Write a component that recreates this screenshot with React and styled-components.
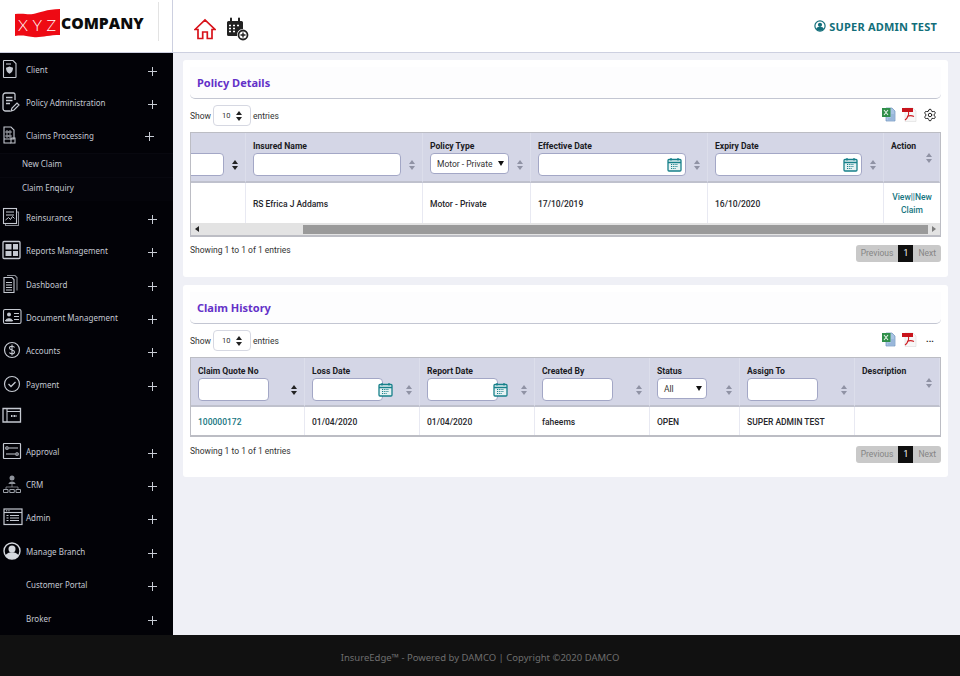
import React from 'react';
import styled, { createGlobalStyle } from 'styled-components';
import { Settings } from 'lucide-react';

const GlobalStyle = createGlobalStyle`
  html, body {
    margin: 0;
    padding: 0;
    height: 100%;
    overflow: hidden;
    background: #eff0f6;
    font-family: "Roboto", "Liberation Sans", sans-serif;
  }
  * { box-sizing: border-box; }
`;

const Page = styled.div`
  display: grid;
  grid-template-rows: 53px 582px 41px;
  grid-template-columns: 960px;
  height: 676px;
  width: 960px;
`;

const Header = styled.header`
  display: flex;
  align-items: stretch;
  background: #fff;
  border-bottom: 1px solid #cdd0e0;
`;

const LogoArea = styled.div`
  width: 173px;
  flex: none;
  display: flex;
  align-items: flex-start;
  padding: 9px 0 0 15px;
  border-right: 1px solid #cdd0e0;
`;

const CompanyName = styled.span`
  font-family: "Open Sans", "Noto Sans", sans-serif;
  font-weight: 800;
  font-size: 15.7px;
  line-height: 28px;
  color: #0c0c0c;
  margin-left: 1px;
`;

const LogoRule = styled.div`
  width: 1px;
  height: 39px;
  background: #e3e3e3;
  margin: -7px 0 0 14px;
`;

const HeaderIcons = styled.div`
  display: flex;
  align-items: center;
  gap: 10px;
  padding: 6px 0 0 21px;
  flex: 1;
`;

const UserName = styled.div`
  display: flex;
  align-items: center;
  gap: 3px;
  padding-right: 23px;
  color: #126e7a;
  font-family: "Noto Sans", sans-serif;
  font-weight: 700;
  font-size: 11px;
  letter-spacing: 0.2px;
`;

const Middle = styled.div`
  display: flex;
  min-height: 0;
  min-width: 0;
`;

const Sidebar = styled.nav`
  width: 173px;
  flex: none;
  background: #020207;
  font-family: "Noto Sans", sans-serif;
`;

const NavRow = styled.div`
  display: grid;
  grid-template-columns: 26px 1fr 9px;
  align-items: center;
  height: 33.4px;
  padding-right: ${(p) => (p.$open ? '19px' : '16px')};
  color: #c3c8d2;
  font-size: 8px;
  svg.plus { margin-top: ${(p) => (p.$open ? '0' : '3px')}; }
`;

const NavLabel = styled.span`
  padding-bottom: 1px;
`;

const NavIcon = styled.span`
  display: flex;
  padding: 0 0 ${(p) => (p.$raised ? '6px' : '2px')} 2px;
`;

const SubRow = styled.div`
  height: 24px;
  display: flex;
  align-items: center;
  padding: 0 0 4px 22px;
  color: #c3c8d2;
  font-size: 8px;
  background: #04040a;
  border-top: 1px solid #08080f;
`;

const Content = styled.main`
  flex: 1;
  min-width: 0;
  padding: 7px 12px 0 10px;
  display: flex;
  flex-direction: column;
  gap: 8px;
`;

const Card = styled.section`
  background: #fff;
  height: ${(p) => p.$height}px;
  padding: 7px;
  border-radius: 3px;
`;

const TitleBar = styled.div`
  height: 32px;
  background: #fdfdfe;
  border-bottom: 1px solid #c3c6d2;
  border-radius: 0 0 5px 5px;
  padding-left: 7px;
  display: flex;
  align-items: center;
`;

const Title = styled.h2`
  margin: 0;
  font-family: "Noto Sans", sans-serif;
  font-size: 11px;
  font-weight: 700;
  color: #6431c8;
`;

const Toolbar = styled.div`
  display: flex;
  align-items: center;
  justify-content: space-between;
  height: 21px;
  margin-top: 6px;
  font-size: 8.5px;
  color: #333;
`;

const ShowEntries = styled.div`
  display: flex;
  align-items: center;
  gap: 2px;
`;

const PageSize = styled.div`
  width: 38px;
  height: 21px;
  border: 1px solid #d6d8e2;
  border-radius: 4px;
  display: flex;
  align-items: center;
  justify-content: space-between;
  padding: 0 8px;
  font-size: 7.5px;
`;

const Exports = styled.div`
  display: flex;
  align-items: center;
  gap: 6px;
  padding: 0 4px 2px 0;
`;

const Dots = styled.span`
  width: 14px;
  text-align: center;
  font-size: 9px;
  font-weight: 700;
  line-height: 9px;
  color: #222;
`;

const TableBox = styled.div`
  margin-top: 6px;
  border: 1px solid #bcbdc4;
  border-bottom-width: 2px;
  overflow: hidden;
`;

const Grid = styled.div`
  display: grid;
  grid-template-columns: ${(p) => p.$cols};
`;

const HeadCell = styled.div`
  height: ${(p) => p.$height}px;
  background: #d4d6e6;
  border-right: 1px solid #dcdeeb;
  border-bottom: 2px solid #bfc1cd;
  padding: 7px 0 0 ${(p) => (p.$flush ? '0' : '7px')};
  min-width: 0;
  &:last-child { border-right: none; }
`;

const HeadLabel = styled.div`
  font-size: 8.6px;
  line-height: 12px;
  font-weight: 700;
  color: #1b1b1f;
  white-space: nowrap;
  height: 13px;
`;

const HeadControls = styled.div`
  display: flex;
  align-items: center;
  justify-content: space-between;
`;

const FieldWrap = styled.div`
  position: relative;
  flex: ${(p) => (p.$width ? `0 0 ${p.$width}px` : '1')};
  min-width: 0;
`;

const TextField = styled.input`
  display: block;
  width: ${(p) => (p.$bleed ? 'calc(100% + 8px)' : '100%')};
  margin-left: ${(p) => (p.$bleed ? '-8px' : '0')};
  height: 23px;
  border: 1px solid #a3a7c6;
  border-radius: 4px;
  background: #fff;
  outline: none;
  padding: 0 4px;
`;

const CalendarSpot = styled.span`
  position: absolute;
  top: 4px;
  right: ${(p) => (p.$over ? '-10px' : '4px')};
  display: flex;
`;

const SelectBox = styled.div`
  display: flex;
  align-items: center;
  justify-content: space-between;
  height: 21px;
  border: 1px solid #a3a7c6;
  border-radius: 4px;
  background: #fff;
  padding: 0 4px 0 6px;
  font-size: 8.5px;
  color: #333;
  white-space: nowrap;
  margin-bottom: 2px;
`;

const SelectCaret = styled.span`
  width: 0;
  height: 0;
  border-left: 3px solid transparent;
  border-right: 3px solid transparent;
  border-top: 5px solid #111;
`;

const SortSlot = styled.span`
  flex: 0 0 21px;
  display: flex;
  justify-content: center;
`;

const BodyCell = styled.div`
  height: ${(p) => p.$height}px;
  padding: 1px 7px 0;
  border-right: 1px solid #e8e9f2;
  display: flex;
  align-items: center;
  font-size: 8.5px;
  font-weight: 500;
  color: #26262b;
  min-width: 0;
  &:last-child { border-right: none; }
`;

const ActionLinks = styled.div`
  width: 100%;
  text-align: center;
  line-height: 13px;
  color: #15757f;
`;

const Link = styled.span`
  color: #15757f;
`;

const ScrollBar = styled.div`
  display: flex;
  align-items: center;
  height: 12px;
  background: #e3e3e3;
`;

const ScrollArrow = styled.span`
  flex: 0 0 12px;
  display: flex;
  justify-content: center;
  &::before {
    content: "";
    border-top: 3px solid transparent;
    border-bottom: 3px solid transparent;
    ${(p) => (p.$right ? 'border-left: 4px solid #7c7c7c;' : 'border-right: 4px solid #222;')}
  }
`;

const ScrollThumb = styled.div`
  height: 9px;
  flex: 1;
  margin-left: 100px;
  background: #9a9a9a;
`;

const TableFooter = styled.div`
  display: flex;
  align-items: flex-start;
  justify-content: space-between;
  line-height: 11px;
  margin-top: ${(p) => p.$gap}px;
  font-size: 8.5px;
  color: #333;
`;

const Pager = styled.div`
  display: flex;
  align-items: stretch;
  height: 17px;
  background: #c9c9c9;
  border-radius: 3px;
  font-size: 8.5px;
  color: #858585;
  line-height: 17px;
`;

const PagerText = styled.span`
  padding: 0 5px;
`;

const PagerCurrent = styled.span`
  width: 15px;
  text-align: center;
  background: #0f0f0f;
  color: #fff;
`;

const Footer = styled.footer`
  background: #111;
  color: #6e6e6e;
  font-family: "Noto Sans", sans-serif;
  font-size: 9.5px;
  padding-top: 3px;
  display: flex;
  align-items: center;
  justify-content: center;
`;

const Plus = () => (
  <svg className="plus" width="9" height="9" viewBox="0 0 9 9">
    <path d="M4.5 0v9M0 4.5h9" stroke="#c8ccd4" strokeWidth="1" />
  </svg>
);

const Sort = ({ dark }) => (
  <svg width="6" height="10" viewBox="0 0 6 10">
    <path d="M3 0l3 4H0zM3 10L0 6h6z" fill={dark ? '#222' : '#8f92a4'} />
  </svg>
);

const Calendar = () => (
  <svg width="15" height="15" viewBox="0 0 15 15" fill="none" stroke="#17808a">
    <rect x="1" y="2.5" width="13" height="11.5" rx="1" strokeWidth="1.3" fill="#e6f2f3" />
    <path d="M1 5.5h13M4 1v2.5M11 1v2.5" strokeWidth="1.3" />
    <path d="M4 7.5h7M4 9.5h7M4 11.5h5" strokeWidth="1.1" strokeDasharray="1 .8" />
  </svg>
);

const HomeIcon = () => (
  <svg width="22" height="22" viewBox="0 0 22 22" fill="none" stroke="#d8121a" strokeWidth="1.7">
    <path d="M1 11.5L11 2l10 9.5h-3v9h-4.7V14H8.7v6.5H4v-9z" />
  </svg>
);

const HeaderCalendar = () => (
  <svg width="23" height="24" viewBox="0 0 23 24" fill="none">
    <path d="M1 5.5A1.5 1.5 0 0 1 2.5 4h13A1.5 1.5 0 0 1 17 5.5V12a6 6 0 0 0-6 7H2.5A1.5 1.5 0 0 1 1 17.5z" fill="#222" />
    <path d="M5 1.5v4M13 1.5v4" stroke="#222" strokeWidth="2" strokeLinecap="round" />
    <path d="M3 8.5h2M7 8.5h2M11 8.5h2M3 11.5h2M7 11.5h2M3 14.5h2M7 14.5h2" stroke="#fff" strokeWidth="1.6" />
    <circle cx="17" cy="18" r="4.5" fill="#fff" stroke="#222" strokeWidth="1.8" />
    <path d="M17 15.5v5M14.5 18h5" stroke="#222" strokeWidth="1.4" />
  </svg>
);

const ExcelIcon = () => (
  <svg width="15" height="15" viewBox="0 0 15 15">
    <path d="M5 1h6l3 3v10H5z" fill="#a9c4e4" stroke="#6f93bd" strokeWidth=".7" />
    <rect x="1" y="1" width="8.5" height="9" fill="#2f8f4a" />
    <path d="M3 3l4 5M7 3L3 8" stroke="#e6f3e8" strokeWidth="1.1" />
    <path d="M10 8h3M10 10h3M7 12h6" stroke="#7da0c8" strokeWidth=".7" />
  </svg>
);

const PdfIcon = () => (
  <svg width="15" height="15" viewBox="0 0 15 15">
    <path d="M3 1h8l3 3v10.5H3z" fill="#f7f7f7" stroke="#ddd" strokeWidth=".6" />
    <rect x="0" y="1" width="11" height="4" fill="#c8141c" />
    <path d="M3 13c3-2 4-6 3.5-8M5 9.5c2-1 5-1 7 0" fill="none" stroke="#cf1f24" strokeWidth="1.1" />
  </svg>
);

const stroke = { fill: 'none', stroke: '#c5c9d1', strokeWidth: 1.1 };

const navIcons = {
  client: (
    <g {...stroke}>
      <path d="M2 1.5h9l3 3V18a.5.5 0 0 1-.5.5H2a.5.5 0 0 1-.5-.5V2a.5.5 0 0 1 .5-.5z" />
      <path d="M4 5h5" />
      <path d="M7.5 7.5L11 8.7c0 3-1.2 5-3.5 6-2.3-1-3.500-3-3.500-6z" fill="#c5c9d1" stroke="none" />
    </g>
  ),
  policy: (
    <g {...stroke}>
      <path d="M13 8V2.5A1.5 1.5 0 0 0 11.5 1h-8A2.5 2.5 0 0 0 1 3.500v13A2.5 2.5 0 0 0 3.500 19H8" strokeWidth="1.3" />
      <path d="M4 5.5h6.5M4 8.5h6.5M4 11.5h4" strokeWidth="1.3" />
      <path d="M9 19l1-3 5-5 2 2-5 5z" strokeWidth="1.2" />
    </g>
  ),
  claims: (
    <g {...stroke}>
      <path d="M2 2h7l3 3v9H2zM2 14v4h7" />
      <path d="M4 6h2v2H4zM7 6h2v2H7zM4 10h2v2H4zM7 10h2v2H7z" strokeWidth=".8" />
      <rect x="9" y="13" width="4" height="5" strokeWidth="1" />
    </g>
  ),
  reinsurance: (
    <g {...stroke}>
      <rect x="1.5" y="1.5" width="13" height="15" />
      <path d="M14.5 5h2v13.5h-13v-2" opacity=".7" />
      <path d="M4 5h8M4 8h8M3.5 13l3-2.5 2 2 2-3 2 2" strokeWidth="1" />
    </g>
  ),
  reports: (
    <g>
      <rect x="1" y="1.5" width="17" height="17" rx="1" fill="none" stroke="#c5c9d1" strokeWidth="1.3" />
      <path d="M3.5 4h6v5.5h-6zM11 4h5v5.5h-5zM3.5 11h6v5h-6zM11 11h5v5h-5z" fill="#c5c9d1" />
    </g>
  ),
  dashboard: (
    <g {...stroke}>
      <path d="M2 3.5h8l2 2v13H2z" />
      <path d="M5 1.5h8l2 2v13" opacity=".7" />
      <path d="M4 8.5h6M4 11h6M4 13.5h6M4 16h6" strokeWidth="1.2" />
    </g>
  ),
  document: (
    <g>
      <rect x="1.5" y="2.5" width="17.5" height="14" rx="1.5" fill="none" stroke="#c5c9d1" strokeWidth="1.1" />
      <circle cx="7" cy="7.5" r="2" fill="#c5c9d1" />
      <path d="M3.5 14c0-3 7-3 7 0zM12 6.5h5M12 9.5h5M12 12.5h5" fill="#c5c9d1" stroke="#c5c9d1" />
    </g>
  ),
  accounts: (
    <g {...stroke}>
      <circle cx="10" cy="10" r="7.5" strokeWidth="1.2" />
      <path d="M12.5 7.5c-.5-1.500-5-2-5 .5s5 1.500 5 4-4.500 2-5 .5M10 4.5v11" />
    </g>
  ),
  payment: (
    <g {...stroke}>
      <circle cx="10" cy="10" r="7.5" strokeWidth="1.2" />
      <path d="M6.5 10L9 12.5 13.5 8" strokeWidth="1.3" />
    </g>
  ),
  crmBox: (
    <g {...stroke}>
      <path d="M1 17V3.5h17.5V17z" strokeWidth="1.3" />
      <path d="M5 3.5V17M5 6.5h13.5" />
      <path d="M9 11h6" strokeWidth="2" strokeDasharray="1 .5" />
    </g>
  ),
  approval: (
    <g {...stroke}>
      <rect x="1.5" y="2.5" width="17" height="15" rx=".5" strokeWidth="1.2" />
      <path d="M7 7h9M4 13h9" />
      <circle cx="5" cy="7" r="1.3" />
      <circle cx="15" cy="13" r="1.3" />
    </g>
  ),
  crm: (
    <g>
      <circle cx="10" cy="4" r="2.5" fill="#8f939b" />
      <path d="M6.5 10c0-3.500 7-3.500 7 0z" fill="#8f939b" />
      <path d="M10 10v3M4 16v-3h12v3" fill="none" stroke="#8f939b" strokeWidth=".8" />
      <path d="M1.5 15.5H6v3H1.5zM7.8 15.5h4.5v3H7.800zM14 15.5h4.5v3H14z" fill="none" stroke="#9ca0a8" />
    </g>
  ),
  admin: (
    <g {...stroke}>
      <rect x="2" y="2" width="18" height="15.5" strokeWidth="1.2" />
      <path d="M2 5.5h18" />
      <path d="M4 3.800h4" strokeDasharray="1 .7" strokeWidth="1" />
      <path d="M4.5 8.5h2M8 8.5h9M4.5 11h2M8 11h9M4.5 13.5h2M8 13.5h9" strokeWidth="1.2" />
    </g>
  ),
  branch: (
    <g>
      <circle cx="10" cy="10" r="8" fill="none" stroke="#d5d8de" strokeWidth="1.4" />
      <circle cx="10" cy="8" r="3.5" fill="#d5d8de" />
      <path d="M3.500 15c1-5 12-5 13 0-3 4-10 4-13 0z" fill="#d5d8de" />
    </g>
  ),
};

function NavItem({ icon, label, open, raised }) {
  return (
    <NavRow $open={open}>
      <NavIcon $raised={raised}>
        {icon && (
          <svg width="22" height="20" viewBox="0 0 22 20">
            {navIcons[icon]}
          </svg>
        )}
      </NavIcon>
      <NavLabel>{label}</NavLabel>
      {label && <Plus />}
    </NavRow>
  );
}

function HeadColumn({ height, label, control, sortDark, flush }) {
  return (
    <HeadCell $height={height} $flush={flush}>
      <HeadLabel>{label}</HeadLabel>
      <HeadControls>
        {control || <span />}
        <SortSlot>
          <Sort dark={sortDark} />
        </SortSlot>
      </HeadControls>
    </HeadCell>
  );
}

function Filter({ width, calendar, over, bleed }) {
  return (
    <FieldWrap $width={width}>
      <TextField aria-label="filter" $bleed={bleed} />
      {calendar && (
        <CalendarSpot $over={over}>
          <Calendar />
        </CalendarSpot>
      )}
    </FieldWrap>
  );
}

function Choice({ width, text }) {
  return (
    <FieldWrap $width={width}>
      <SelectBox>
        {text}
        <SelectCaret />
      </SelectBox>
    </FieldWrap>
  );
}

function Tools({ last }) {
  return (
    <Toolbar>
      <ShowEntries>
        Show
        <PageSize>
          10
          <Sort dark />
        </PageSize>
        entries
      </ShowEntries>
      <Exports>
        <ExcelIcon />
        <PdfIcon />
        {last}
      </Exports>
    </Toolbar>
  );
}

function Paging({ gap }) {
  return (
    <TableFooter $gap={gap}>
      Showing 1 to 1 of 1 entries
      <Pager>
        <PagerText>Previous</PagerText>
        <PagerCurrent>1</PagerCurrent>
        <PagerText>Next</PagerText>
      </Pager>
    </TableFooter>
  );
}

export default function App() {
  return (
    <Page>
      <GlobalStyle />
      <Header>
        <LogoArea>
          <svg width="45" height="29" viewBox="0 0 45 29">
            <path d="M0 5c10-1 12 1 18 0s14-5 27-5v26c-12 0-19 3-27 2S8 26 0 27z" fill="#ee0a14" />
            <text x="3" y="22" fontFamily="Lato" fontSize="16" fill="#fff" fontWeight="300" textLength="38">XYZ</text>
          </svg>
          <CompanyName>COMPANY</CompanyName>
          <LogoRule />
        </LogoArea>
        <HeaderIcons>
          <HomeIcon />
          <HeaderCalendar />
        </HeaderIcons>
        <UserName>
          <svg width="12" height="12" viewBox="0 0 20 20">
            <circle cx="10" cy="10" r="8.5" fill="none" stroke="#126e7a" strokeWidth="2" />
            <circle cx="10" cy="8" r="3.5" fill="#126e7a" />
            <path d="M3.5 15c1-5 12-5 13 0-3 4-10 4-13 0z" fill="#126e7a" />
          </svg>
          SUPER ADMIN TEST
        </UserName>
      </Header>

      <Middle>
        <Sidebar>
          <NavItem icon="client" label="Client" />
          <NavItem icon="policy" label="Policy Administration" />
          <NavItem icon="claims" label="Claims Processing" open />
          <SubRow>New Claim</SubRow>
          <SubRow>Claim Enquiry</SubRow>
          <NavItem icon="reinsurance" label="Reinsurance" />
          <NavItem icon="reports" label="Reports Management" />
          <NavItem icon="dashboard" label="Dashboard" />
          <NavItem icon="document" label="Document Management" />
          <NavItem icon="accounts" label="Accounts" />
          <NavItem icon="payment" label="Payment" />
          <NavItem icon="crmBox" raised />
          <NavItem icon="approval" label="Approval" />
          <NavItem icon="crm" label="CRM" />
          <NavItem icon="admin" label="Admin" />
          <NavItem icon="branch" label="Manage Branch" />
          <NavItem label="Customer Portal" />
          <NavItem label="Broker" />
        </Sidebar>

        <Content>
          <Card $height={217}>
            <TitleBar>
              <Title>Policy Details</Title>
            </TitleBar>
            <Tools last={<Settings size={14} color="#222" strokeWidth={1.7} />} />
            <TableBox>
              <Grid $cols="55px 177px 108px 177px 176px minmax(0, 1fr)">
                <HeadColumn height={50} flush sortDark control={<Filter width={33} bleed />} />
                <HeadColumn height={50} label="Insured Name" control={<Filter />} />
                <HeadColumn height={50} label="Policy Type" control={<Choice text="Motor - Private" />} />
                <HeadColumn height={50} label="Effective Date" control={<Filter calendar />} />
                <HeadColumn height={50} label="Expiry Date" control={<Filter calendar />} />
                <HeadColumn height={50} label="Action" />
                <BodyCell $height={40} />
                <BodyCell $height={40}>RS Efrica J Addams</BodyCell>
                <BodyCell $height={40}>Motor - Private</BodyCell>
                <BodyCell $height={40}>17/10/2019</BodyCell>
                <BodyCell $height={40}>16/10/2020</BodyCell>
                <BodyCell $height={40}>
                  <ActionLinks>View||New Claim</ActionLinks>
                </BodyCell>
              </Grid>
              <ScrollBar>
                <ScrollArrow />
                <ScrollThumb />
                <ScrollArrow $right />
              </ScrollBar>
            </TableBox>
            <Paging gap={8} />
          </Card>

          <Card $height={192}>
            <TitleBar>
              <Title>Claim History</Title>
            </TitleBar>
            <Tools last={<Dots>...</Dots>} />
            <TableBox>
              <Grid $cols="114px 115px 115px 115px 90px 115px minmax(0, 1fr)">
                <HeadColumn height={49} label="Claim Quote No" sortDark control={<Filter width={71} />} />
                <HeadColumn height={49} label="Loss Date" control={<Filter width={71} calendar over />} />
                <HeadColumn height={49} label="Report Date" control={<Filter width={71} calendar over />} />
                <HeadColumn height={49} label="Created By" control={<Filter width={71} />} />
                <HeadColumn height={49} label="Status" control={<Choice width={50} text="All" />} />
                <HeadColumn height={49} label="Assign To" control={<Filter width={71} />} />
                <HeadColumn height={49} label="Description" />
                <BodyCell $height={28}><Link>100000172</Link></BodyCell>
                <BodyCell $height={28}>01/04/2020</BodyCell>
                <BodyCell $height={28}>01/04/2020</BodyCell>
                <BodyCell $height={28}>faheems</BodyCell>
                <BodyCell $height={28}>OPEN</BodyCell>
                <BodyCell $height={28}>SUPER ADMIN TEST</BodyCell>
                <BodyCell $height={28} />
              </Grid>
            </TableBox>
            <Paging gap={9} />
          </Card>
        </Content>
      </Middle>

      <Footer>InsureEdge™ - Powered by DAMCO | Copyright ©2020 DAMCO</Footer>
    </Page>
  );
}
